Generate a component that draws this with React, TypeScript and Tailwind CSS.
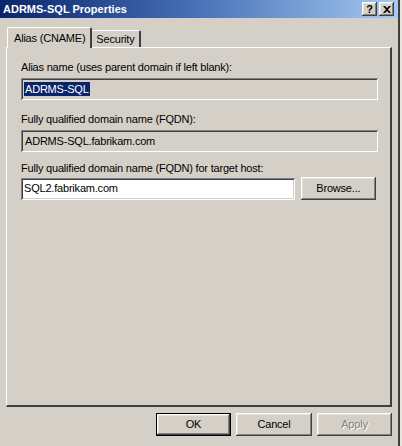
export default function App() {
  const raised =
    "shadow-[inset_-1px_-1px_#404040,inset_1px_1px_#ffffff,inset_-2px_-2px_#808080,inset_2px_2px_#e4e2dc]";
  const sunken =
    "shadow-[inset_1px_1px_#808080,inset_-1px_-1px_#ffffff,inset_2px_2px_#404040,inset_-2px_-2px_#d4d0c8]";

  return (
    <div className="flex h-[446px] w-[402px] overflow-hidden bg-[#d4d0c8] font-['Liberation_Sans',Arial,sans-serif] text-[11px] tracking-[-0.2px] text-black">
      <div className="flex h-full w-[400px] flex-col border-r-2 border-r-[#404040]">
        {/* title bar */}
        <div className="flex h-[18px] items-center justify-between bg-gradient-to-r from-[#0a246a] via-[#4a72b8] to-[#a6caf0] pl-[3px] pr-[4px]">
          <span className="text-[11px] font-bold tracking-normal text-white">ADRMS-SQL Properties</span>
          <div className="flex gap-[2px]">
            <div className={`flex h-[14px] w-[15px] items-center justify-center bg-[#d4d0c8] text-[11px] font-bold leading-none ${raised}`}>
              ?
            </div>
            <div className={`flex h-[14px] w-[15px] items-center justify-center bg-[#d4d0c8] ${raised}`}>
              <svg width="8" height="7" viewBox="0 0 8 7">
                <path d="M0 0h2l2 2 2-2h2L5 3.5 8 7H6L4 5 2 7H0l3-3.5z" fill="#000" />
              </svg>
            </div>
          </div>
        </div>

        {/* tabs */}
        <div className="mt-[9px] flex items-end pl-[7px]">
          <div className="relative z-10 -mb-px flex h-[21px] items-center rounded-t-[2px] border-l border-t border-l-white border-t-white border-r-2 border-r-[#404040] bg-[#d4d0c8] pl-[6px] pr-[5px]">
            Alias (CNAME)
          </div>
          <div className="flex h-[17px] items-center rounded-t-[2px] border-t border-t-white border-r-2 border-r-[#404040] bg-[#d4d0c8] pl-[4px] pr-[4px]">
            Security
          </div>
        </div>

        {/* panel */}
        <div className="ml-[6px] flex h-[360px] w-[386px] flex-col border-l border-t border-l-white border-t-white border-r-2 border-b-2 border-r-[#404040] border-b-[#404040] px-[14px] pt-[13px]">
          <label className="leading-[13px]">Alias name (uses parent domain if left blank):</label>
          <div className={`mt-[4px] flex h-[22px] w-[357px] items-center pl-[3px] ${sunken}`}>
            <span className="bg-[#0a246a] px-px leading-[14px] text-white">ADRMS-SQL</span>
          </div>

          <label className="mt-[13px] leading-[13px]">Fully qualified domain name (FQDN):</label>
          <div className={`mt-[4px] flex h-[22px] w-[357px] items-center pl-[4px] ${sunken}`}>
            ADRMS-SQL.fabrikam.com
          </div>

          <label className="mt-[10px] leading-[13px]">Fully qualified domain name (FQDN) for target host:</label>
          <div className="mt-[2px] flex items-center gap-[6px]">
            <div className={`flex h-[22px] w-[276px] items-center bg-white pl-[3px] ${sunken}`}>
              SQL2.fabrikam.com
            </div>
            <button className={`h-[23px] w-[76px] bg-[#d4d0c8] ${raised}`}>Browse...</button>
          </div>
        </div>

        {/* buttons */}
        <div className="mt-[6px] flex justify-end gap-[5px] pr-[6px]">
          <button className={`h-[23px] w-[75px] border border-black bg-[#d4d0c8] ${raised}`}>OK</button>
          <button className={`h-[23px] w-[76px] bg-[#d4d0c8] ${raised}`}>Cancel</button>
          <button className={`h-[23px] w-[75px] bg-[#d4d0c8] text-[#808080] [text-shadow:1px_1px_#ffffff] ${raised}`}>
            Apply
          </button>
        </div>
      </div>
      <div className="h-full w-[2px] bg-[#e8e6e0]" />
    </div>
  );
}
